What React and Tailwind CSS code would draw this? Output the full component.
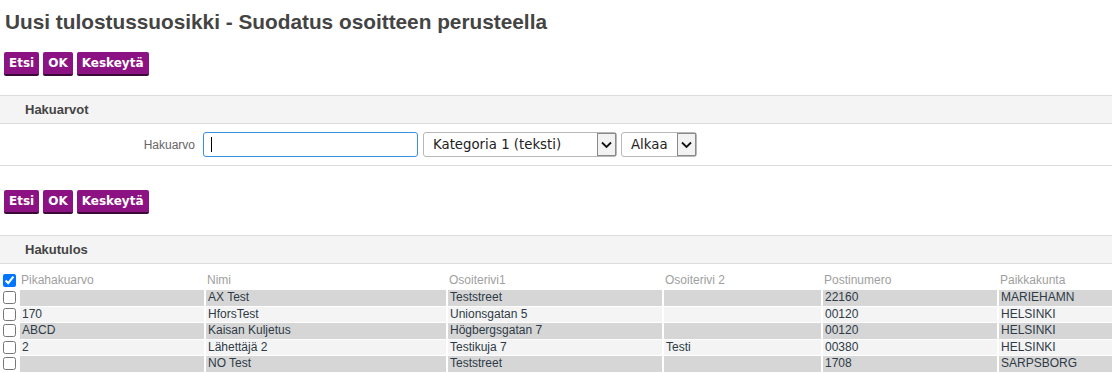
import React from 'react';

const rows = [
    { pika: '', nimi: 'AX Test', os1: 'Teststreet', os2: '', posti: '22160', paikka: 'MARIEHAMN' },
    { pika: '170', nimi: 'HforsTest', os1: 'Unionsgatan 5', os2: '', posti: '00120', paikka: 'HELSINKI' },
    { pika: 'ABCD', nimi: 'Kaisan Kuljetus', os1: 'Högbergsgatan 7', os2: '', posti: '00120', paikka: 'HELSINKI' },
    { pika: '2', nimi: 'Lähettäjä 2', os1: 'Testikuja 7', os2: 'Testi', posti: '00380', paikka: 'HELSINKI' },
    { pika: '', nimi: 'NO Test', os1: 'Teststreet', os2: '', posti: '1708', paikka: 'SARPSBORG' },
];

const cols = 'grid grid-cols-[18px_184px_240px_214px_157px_174px_1fr] gap-x-[2px]';

const Buttons = () => (
    <div className="flex gap-[4px] pl-[4px]">
        {['Etsi', 'OK', 'Keskeytä'].map((label) => (
            <button
                key={label}
                className="h-[24px] px-[5px] bg-[#8c1283] text-white text-[12px] font-bold rounded-[2px] border-b-2 border-[#3a0a36] font-['DejaVu_Sans',sans-serif] leading-none"
            >
                {label}
            </button>
        ))}
    </div>
);

const SectionBar = ({ title }) => (
    <div className="h-[29px] bg-[#f4f4f4] border-y border-[#dddddd] flex items-center pl-[25px] text-[13px] font-bold text-[#444]">
        {title}
    </div>
);

const Chevron = () => (
    <svg width="11" height="8" viewBox="0 0 11 8">
        <path d="M1 1.5 L5.5 6 L10 1.5" fill="none" stroke="#111" strokeWidth="1.8" />
    </svg>
);

const FakeSelect = ({ text, width }) => (
    <div className={`${width} h-[25px] border border-[#b8b8b8] rounded-[3px] bg-white flex items-stretch`}>
        <span className="flex-1 flex items-center pl-[9px] text-[13.3px] text-[#222] font-['DejaVu_Sans',sans-serif]">{text}</span>
        <span className="w-[19px] border border-[#8a8a8a] bg-[#f2f2f2] flex items-center justify-center">
            <Chevron />
        </span>
    </div>
);

export default function App() {
    return (
        <div className="w-[1112px] h-[373px] overflow-hidden bg-white font-['Liberation_Sans',Arial,sans-serif] text-[#333]">
            <h1 className="pl-[5px] pt-[6px] h-[52px] text-[20.8px] font-bold text-[#444]">
                Uusi tulostussuosikki - Suodatus osoitteen perusteella
            </h1>
            <div className="h-[43px]">
                <Buttons />
            </div>
            <SectionBar title="Hakuarvot" />
            <div className="h-[42px] border-b border-[#dddddd] flex items-center">
                <span className="w-[203px] text-right pr-[8px] text-[12px] text-[#666]">Hakuarvo</span>
                <div className="w-[215px] h-[25px] border border-[#3b8fe0] rounded-[3px] flex items-center pl-[7px]">
                    <span className="w-[1px] h-[15px] bg-black" />
                </div>
                <div className="ml-[5px] flex gap-[4px]">
                    <FakeSelect text="Kategoria 1 (teksti)" width="w-[194px]" />
                    <FakeSelect text="Alkaa" width="w-[76px]" />
                </div>
            </div>
            <div className="pt-[24px] h-[69px]">
                <Buttons />
            </div>
            <SectionBar title="Hakutulos" />
            <div className="pt-[6px] text-[12px]">
                <div className={`${cols} h-[20px] items-center text-[#a0a0a0]`}>
                    <input type="checkbox" defaultChecked className="w-[13px] h-[13px] ml-[3px] m-0" />
                    <span className="pl-[1px]">Pikahakuarvo</span>
                    <span className="pl-[1px]">Nimi</span>
                    <span className="pl-[1px]">Osoiterivi1</span>
                    <span className="pl-[1px]">Osoiterivi 2</span>
                    <span className="pl-[1px]">Postinumero</span>
                    <span className="pl-[1px]">Paikkakunta</span>
                </div>
                <div className="flex flex-col gap-y-[1px]">
                    {rows.map((r, i) => {
                        const bg = i % 2 === 0 ? 'bg-[#d6d6d6]' : 'bg-[#f4f4f4]';
                        return (
                            <div key={i} className={`${cols} h-[15.5px] text-[#2e3a46] leading-[15.5px]`}>
                                <span className="flex items-center">
                                    <input type="checkbox" className="w-[13px] h-[13px] ml-[3px] m-0" />
                                </span>
                                {[r.pika, r.nimi, r.os1, r.os2, r.posti, r.paikka].map((v, j) => (
                                    <span key={j} className={`${bg} pl-[2px]`}>{v}</span>
                                ))}
                            </div>
                        );
                    })}
                </div>
            </div>
        </div>
    );
}
